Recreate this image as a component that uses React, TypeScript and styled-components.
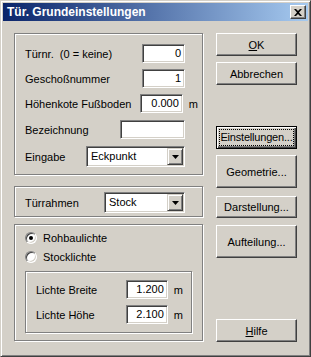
import styled, { createGlobalStyle } from 'styled-components'

const GlobalStyle = createGlobalStyle`
  html, body {
    margin: 0;
    padding: 0;
    background: #d4d0c8;
  }
  body {
    font-family: 'Liberation Sans', Arial, sans-serif;
    font-size: 11px;
    color: #000;
  }
`

const SWindow = styled.div`
  width: 311px;
  height: 357px;
  box-sizing: border-box;
  display: flex;
  flex-direction: column;
  padding: 2px;
  background: #d4d0c8;
  border: 1px solid;
  border-color: #d4d0c8 #404040 #404040 #d4d0c8;
  box-shadow: inset 1px 1px #fff, inset -1px -1px #808080;
`

const STitleBar = styled.div`
  height: 18px;
  display: flex;
  align-items: center;
  justify-content: space-between;
  padding: 0 2px 0 4px;
  background: linear-gradient(to right, #0a246a, #a6caf0);
  color: #fff;
  font-weight: bold;
  font-size: 12px;
  white-space: nowrap;
`

const SCloseButton = styled.div`
  width: 16px;
  height: 14px;
  box-sizing: border-box;
  display: flex;
  align-items: center;
  justify-content: center;
  background: #d4d0c8;
  border: 1px solid;
  border-color: #fff #404040 #404040 #fff;
  box-shadow: inset -1px -1px #808080;
`

const SBody = styled.div`
  flex: 1;
  display: flex;
  gap: 13px;
  padding: 12px 11px 0 11px;
`

const SLeft = styled.div`
  width: 189px;
  display: flex;
  flex-direction: column;
  align-self: flex-start;
`

const SRight = styled.div`
  width: 81px;
  display: flex;
  flex-direction: column;
  height: 309px;
`

const SGroup = styled.div<{ $mt?: number; $pad: string }>`
  margin-top: ${(p) => p.$mt ?? 0}px;
  padding: ${(p) => p.$pad};
  border: 1px solid #808080;
  box-shadow: inset 1px 1px #fff, 1px 1px #fff;
  display: flex;
  flex-direction: column;
`

const SRow = styled.div<{ $h?: number; $mt?: number }>`
  display: flex;
  align-items: center;
  height: ${(p) => p.$h ?? 19}px;
  margin-top: ${(p) => p.$mt ?? 0}px;
`

const SLabel = styled.div`
  flex: 1;
  white-space: nowrap;
`

const SUnit = styled.div<{ $w?: number }>`
  flex: 0 0 ${(p) => p.$w ?? 13}px;
  box-sizing: border-box;
  padding-left: 6px;
  white-space: nowrap;
`

const SField = styled.div<{ $w: number }>`
  width: ${(p) => p.$w}px;
  height: 19px;
  box-sizing: border-box;
  padding: 0 3px;
  line-height: 17px;
  text-align: right;
  background: #fff;
  border: 1px solid;
  border-color: #808080 #fff #fff #808080;
  box-shadow: inset 1px 1px #404040, inset -1px -1px #d4d0c8;
`

const SCombo = styled.div<{ $w: number }>`
  width: ${(p) => p.$w}px;
  height: 21px;
  box-sizing: border-box;
  display: flex;
  align-items: stretch;
  padding: 1px;
  background: #fff;
  border: 1px solid;
  border-color: #808080 #fff #fff #808080;
  box-shadow: inset 1px 1px #404040, inset -1px -1px #d4d0c8;
`

const SComboText = styled.div`
  flex: 1;
  padding-left: 3px;
  line-height: 17px;
`

const SComboArrow = styled.div`
  width: 16px;
  box-sizing: border-box;
  display: flex;
  align-items: center;
  justify-content: center;
  background: #d4d0c8;
  border: 1px solid;
  border-color: #d4d0c8 #404040 #404040 #d4d0c8;
  box-shadow: inset 1px 1px #fff, inset -1px -1px #808080;
`

const SRadioRow = styled.div<{ $mt?: number }>`
  display: flex;
  align-items: center;
  height: 16px;
  gap: 6px;
  margin-top: ${(p) => p.$mt ?? 0}px;
`

const SRadio = styled.div<{ $checked?: boolean }>`
  width: 12px;
  height: 12px;
  box-sizing: border-box;
  border-radius: 50%;
  border: 1px solid;
  border-color: #808080 #fff #fff #808080;
  box-shadow: inset 1px 1px #404040, inset -1px -1px #d4d0c8;
  background: #fff;
  display: flex;
  align-items: center;
  justify-content: center;
  &::after {
    content: '';
    width: 4px;
    height: 4px;
    border-radius: 50%;
    background: ${(p) => (p.$checked ? '#000' : 'transparent')};
  }
`

const SButton = styled.div<{ $h?: number; $mt?: number; $default?: boolean }>`
  height: ${(p) => p.$h ?? 23}px;
  margin-top: ${(p) => (p.$mt === undefined ? 'auto' : `${p.$mt}px`)};
  box-sizing: border-box;
  display: flex;
  align-items: center;
  justify-content: center;
  white-space: nowrap;
  background: #d4d0c8;
  border: 1px solid;
  border-color: ${(p) => (p.$default ? '#000' : '#fff #404040 #404040 #fff')};
  box-shadow: ${(p) =>
    p.$default
      ? 'inset 1px 1px #fff, inset -1px -1px #404040, inset -2px -2px #808080'
      : 'inset -1px -1px #808080'};
`

const SFocus = styled.span`
  border: 1px dotted #000;
  padding: 1px 0;
  line-height: 13px;
  letter-spacing: -0.2px;
`

const CloseIcon = () => (
  <svg width="8" height="7" viewBox="0 0 8 7">
    <path d="M0 0h2l2 2 2-2h2L5 3.5 8 7H6L4 5 2 7H0l3-3.5z" fill="#000" />
  </svg>
)

const ArrowIcon = () => (
  <svg width="7" height="4" viewBox="0 0 7 4">
    <polygon points="0,0 7,0 3.5,4" fill="#000" />
  </svg>
)

const Combo = ({ w, value }: { w: number; value: string }) => (
  <SCombo $w={w}>
    <SComboText>{value}</SComboText>
    <SComboArrow>
      <ArrowIcon />
    </SComboArrow>
  </SCombo>
)

export default function App() {
  return (
    <>
      <GlobalStyle />
      <SWindow>
        <STitleBar>
          <span>Tür. Grundeinstellungen</span>
          <SCloseButton>
            <CloseIcon />
          </SCloseButton>
        </STitleBar>
        <SBody>
          <SLeft>
            <SGroup $pad="10px 4px 7px 10px">
              <SRow>
                <SLabel>Türnr.&nbsp; (0 = keine)</SLabel>
                <SField $w={43}>0</SField>
                <SUnit />
              </SRow>
              <SRow $mt={6}>
                <SLabel>Geschoßnummer</SLabel>
                <SField $w={43}>1</SField>
                <SUnit />
              </SRow>
              <SRow $mt={6}>
                <SLabel>Höhenkote Fußboden</SLabel>
                <SField $w={43}>0.000</SField>
                <SUnit>m</SUnit>
              </SRow>
              <SRow $mt={7}>
                <SLabel>Bezeichnung</SLabel>
                <SField $w={65} />
                <SUnit />
              </SRow>
              <SRow $h={21} $mt={7}>
                <SLabel>Eingabe</SLabel>
                <Combo w={99} value="Eckpunkt" />
                <SUnit />
              </SRow>
            </SGroup>

            <SGroup $mt={11} $pad="5px 4px 3px 10px">
              <SRow $h={21}>
                <SLabel>Türrahmen</SLabel>
                <Combo w={81} value="Stock" />
                <SUnit />
              </SRow>
            </SGroup>

            <SGroup $mt={7} $pad="5px 10px 7px 10px">
              <SRadioRow>
                <SRadio $checked />
                <span>Rohbaulichte</span>
              </SRadioRow>
              <SRadioRow $mt={3}>
                <SRadio />
                <span>Stocklichte</span>
              </SRadioRow>
              <SGroup $mt={6} $pad="8px 8px 8px 10px">
                <SRow>
                  <SLabel>Lichte Breite</SLabel>
                  <SField $w={42}>1.200</SField>
                  <SUnit $w={14}>m</SUnit>
                </SRow>
                <SRow $mt={6}>
                  <SLabel>Lichte Höhe</SLabel>
                  <SField $w={42}>2.100</SField>
                  <SUnit $w={14}>m</SUnit>
                </SRow>
              </SGroup>
            </SGroup>
          </SLeft>

          <SRight>
            <SButton $mt={0}>
              <span>
                <u>O</u>K
              </span>
            </SButton>
            <SButton $mt={6}>Abbrechen</SButton>
            <SButton $mt={41} $default>
              <SFocus>Einstellungen...</SFocus>
            </SButton>
            <SButton $mt={6} $h={33}>
              Geometrie...
            </SButton>
            <SButton $mt={8} $h={22}>
              Darstellung...
            </SButton>
            <SButton $mt={7} $h={33}>
              Aufteilung...
            </SButton>
            <SButton>
              <span>
                <u>H</u>ilfe
              </span>
            </SButton>
          </SRight>
        </SBody>
      </SWindow>
    </>
  )
}
